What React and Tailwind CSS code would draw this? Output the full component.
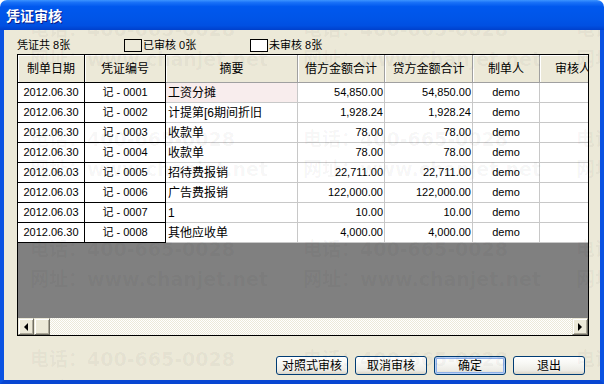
import React from "react";

const rows = [
  ["2012.06.30", "记 - 0001", "工资分摊", "54,850.00", "54,850.00", "demo"],
  ["2012.06.30", "记 - 0002", "计提第[6期间折旧", "1,928.24", "1,928.24", "demo"],
  ["2012.06.30", "记 - 0003", "收款单", "78.00", "78.00", "demo"],
  ["2012.06.30", "记 - 0004", "收款单", "78.00", "78.00", "demo"],
  ["2012.06.03", "记 - 0005", "招待费报销", "22,711.00", "22,711.00", "demo"],
  ["2012.06.03", "记 - 0006", "广告费报销", "122,000.00", "122,000.00", "demo"],
  ["2012.06.03", "记 - 0007", "1", "10.00", "10.00", "demo"],
  ["2012.06.30", "记 - 0008", "其他应收单", "4,000.00", "4,000.00", "demo"],
];

function HeaderCell({ w, fixed, children }) {
  return (
    <div
      className={`shrink-0 h-full flex items-center justify-center border-r border-b shadow-[inset_1px_1px_0_#ffffff] text-[12px] text-black ${w} ${
        fixed ? "border-r-black border-b-black" : "border-r-[#a0a0a0] border-b-[#a0a0a0]"
      }`}
    >
      {children}
    </div>
  );
}

function Btn({ children, def }) {
  return (
    <div
      className={`w-[72px] h-[19px] flex items-center justify-center rounded-[3px] border border-[#003C74] bg-[linear-gradient(to_bottom,#ffffff_0%,#f7f7f3_40%,#ecebe5_80%,#d8d3c6_100%)] text-[12px] text-black ${
        def ? "shadow-[inset_0_0_0_1px_#b9d1f6,inset_0_0_0_2px_#8fb0e8]" : ""
      }`}
    >
      {children}
    </div>
  );
}

function ScrollBtn({ dir }) {
  return (
    <div className="w-[16px] h-full shrink-0 bg-[#ECE9D8] border border-t-[#ECE9D8] border-l-[#ECE9D8] border-r-[#716F64] border-b-[#716F64] shadow-[inset_1px_1px_0_#ffffff,inset_-1px_-1px_0_#ACA899] flex items-center justify-center">
      {dir === "left" ? (
        <div className="w-0 h-0 border-y-[4px] border-y-transparent border-r-[4px] border-r-black" />
      ) : dir === "right" ? (
        <div className="w-0 h-0 border-y-[4px] border-y-transparent border-l-[4px] border-l-black" />
      ) : null}
    </div>
  );
}

function Watermark() {
  const xs = [30, 303, 576];
  const tel = [-10, 100, 210, 320];
  const web = [20, 130, 240, 350];
  const items = [];
  xs.forEach((x) => {
    tel.forEach((y) =>
      items.push(
        <div key={`t${x}-${y}`} className="absolute whitespace-nowrap" style={{ left: x, top: y }}>
          电话：400-665-0028
        </div>
      )
    );
    web.forEach((y) =>
      items.push(
        <div key={`w${x}-${y}`} className="absolute whitespace-nowrap" style={{ left: x, top: y }}>
          网址：www.chanjet.net
        </div>
      )
    );
  });
  return (
    <div className="absolute left-[4px] right-[4px] top-[30px] bottom-[4px] overflow-hidden pointer-events-none text-[19px] leading-[19px] font-bold text-black/[0.04] font-['DejaVu_Sans','Noto_Sans_CJK_SC',sans-serif]">
      <div className="absolute -left-[4px] top-0">{items}</div>
    </div>
  );
}

export default function App() {
  return (
    <div className="relative w-[604px] h-[384px] overflow-hidden bg-white font-['Liberation_Sans','Noto_Sans_CJK_SC',sans-serif]">
      <div className="flex flex-col w-full h-full">
        {/* title bar */}
        <div className="h-[30px] shrink-0 rounded-t-[7px] bg-[linear-gradient(to_bottom,#3D95FF_0%,#1A72F8_8%,#0058EE_22%,#0055E8_60%,#0050E2_85%,#0040CC_100%)] flex items-center pl-[6px]">
          <span className="text-white font-bold text-[14px] leading-none [text-shadow:1px_1px_0_#0A1E8C] font-['Noto_Sans_CJK_SC',sans-serif]">
            凭证审核
          </span>
        </div>
        {/* client */}
        <div className="flex-1 flex flex-col bg-[#ECE9D8] border-x-[4px] border-b-[4px] border-x-[#0A52E2] border-b-[#0846D2] pt-[6px] pl-[13px] pr-[11px]">
          {/* labels */}
          <div className="h-[18px] flex items-center text-[11px] text-black">
            <span className="w-[107px] shrink-0">凭证共 8张</span>
            <div className="w-[18px] h-[13px] shrink-0 border border-black bg-[#ECE9D8]" />
            <span className="w-[107px] shrink-0 ml-[1px]">已审核 0张</span>
            <div className="w-[18px] h-[13px] shrink-0 border border-black bg-white" />
            <span className="ml-[1px]">未审核 8张</span>
          </div>
          {/* table */}
          <div className="w-[572px] h-[282px] border border-black flex flex-col overflow-hidden">
            <div className="h-[28px] flex shrink-0 bg-[#ECE9D8] overflow-hidden">
              <HeaderCell w="w-[67px]" fixed>制单日期</HeaderCell>
              <HeaderCell w="w-[81px]" fixed>凭证编号</HeaderCell>
              <HeaderCell w="w-[132px]">摘要</HeaderCell>
              <HeaderCell w="w-[87px]">借方金额合计</HeaderCell>
              <HeaderCell w="w-[88px]">贷方金额合计</HeaderCell>
              <HeaderCell w="w-[67px]">制单人</HeaderCell>
              <HeaderCell w="w-[67px]">审核人</HeaderCell>
            </div>
            {rows.map((r, i) => (
              <div key={i} className="h-[20px] flex shrink-0 overflow-hidden bg-white text-black">
                <div className="w-[67px] shrink-0 border-r border-b border-black flex items-center justify-center text-[11px]">
                  {r[0]}
                </div>
                <div className="w-[81px] shrink-0 border-r border-b border-black flex items-center justify-center text-[11px]">
                  {r[1]}
                </div>
                <div
                  className={`w-[132px] shrink-0 border-r border-b border-[#C8C8C8] flex items-center pl-[2px] text-[12px] ${
                    i === 0 ? "bg-[#F8EDED]" : ""
                  }`}
                >
                  {r[2]}
                </div>
                <div className="w-[87px] shrink-0 border-r border-b border-[#C8C8C8] flex items-center justify-end pr-[1px] text-[11px]">
                  {r[3]}
                </div>
                <div className="w-[88px] shrink-0 border-r border-b border-[#C8C8C8] flex items-center justify-end pr-[1px] text-[11px]">
                  {r[4]}
                </div>
                <div className="w-[67px] shrink-0 border-r border-b border-[#C8C8C8] flex items-center justify-center text-[11px]">
                  {r[5]}
                </div>
                <div className="w-[67px] shrink-0 border-r border-b border-[#C8C8C8]" />
              </div>
            ))}
            <div className="flex-1 bg-[#808080]" />
            <div className="h-[17px] shrink-0 flex">
              <ScrollBtn dir="left" />
              <ScrollBtn />
              <div className="flex-1 bg-[repeating-conic-gradient(#ffffff_0_25%,#ECE9D8_0_50%)] bg-[length:2px_2px]" />
              <ScrollBtn dir="right" />
            </div>
          </div>
          {/* buttons */}
          <div className="mt-[20px] flex justify-end gap-[7px] pr-[4px]">
            <Btn>对照式审核</Btn>
            <Btn>取消审核</Btn>
            <Btn def>确定</Btn>
            <Btn>退出</Btn>
          </div>
        </div>
      </div>
      <Watermark />
    </div>
  );
}
